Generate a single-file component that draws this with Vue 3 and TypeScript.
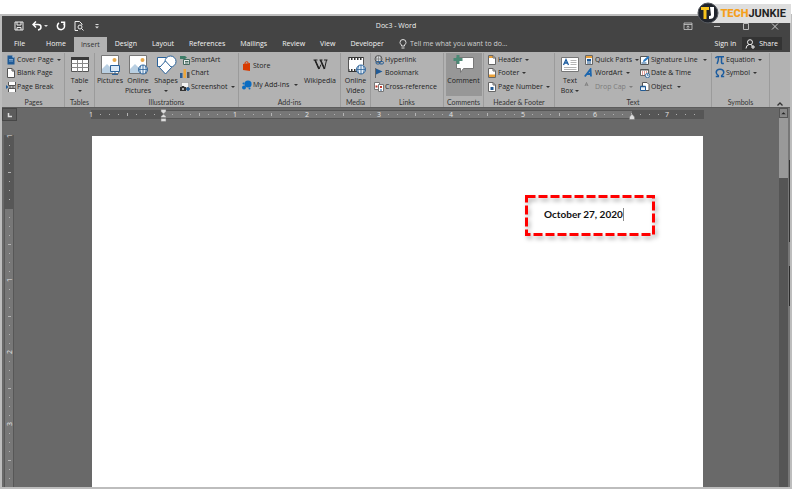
<script setup lang="ts">
interface Item {
  icon: string
  label: string
  menu?: boolean
  disabled?: boolean
}

const tabs: string[] = ['File', 'Home', 'Insert', 'Design', 'Layout', 'References', 'Mailings', 'Review', 'View', 'Developer']

const pages: Item[] = [
  { icon: 'cover', label: 'Cover Page', menu: true },
  { icon: 'blank', label: 'Blank Page' },
  { icon: 'break', label: 'Page Break' },
]
const art: Item[] = [
  { icon: 'smartart', label: 'SmartArt' },
  { icon: 'chart', label: 'Chart' },
  { icon: 'screenshot', label: 'Screenshot', menu: true },
]
const addins: Item[] = [
  { icon: 'store', label: 'Store' },
  { icon: 'addins', label: 'My Add-ins', menu: true },
]
const links: Item[] = [
  { icon: 'link', label: 'Hyperlink' },
  { icon: 'bookmark', label: 'Bookmark' },
  { icon: 'crossref', label: 'Cross-reference' },
]
const headers: Item[] = [
  { icon: 'header', label: 'Header', menu: true },
  { icon: 'footer', label: 'Footer', menu: true },
  { icon: 'pagenum', label: 'Page Number', menu: true },
]
const textParts: Item[] = [
  { icon: 'parts', label: 'Quick Parts', menu: true },
  { icon: 'wordart', label: 'WordArt', menu: true },
  { icon: 'dropcap', label: 'Drop Cap', menu: true, disabled: true },
]
const textInserts: Item[] = [
  { icon: 'signature', label: 'Signature Line', menu: true },
  { icon: 'date', label: 'Date & Time' },
  { icon: 'object', label: 'Object', menu: true },
]
const symbols: Item[] = [
  { icon: 'equation', label: 'Equation', menu: true },
  { icon: 'symbol', label: 'Symbol', menu: true },
]

const small: Record<string, string> = {
  cover: '<path d="M1.5 .5h5l2 2v7h-7z" fill="#1f5a96"/><path d="M6.500 .5v2h2z" fill="#dfe8f2"/><path d="M3 4.500h4M3 6h4" stroke="#7ea7d0"/>',
  blank: '<path d="M1.500 .5h4.500l2.500 2.500v6.500h-7z" fill="#fff" stroke="#555"/><path d="M6 .5v2.500h2.500" fill="none" stroke="#555"/>',
  break: '<path d="M2.500 0v3.500h7V0M2.500 10V6.500h7V10" fill="#fff" stroke="#555"/><path d="M3 5h7" stroke="#555" stroke-dasharray="2 1"/><path d="M0 3l2.500 2L0 7z" fill="#1f5a96"/>',
  smartart: '<path d="M0 1h5l2 1.500L5 4H0z" fill="#3d7d67"/><path d="M3.500 4.500h6v5h-6z" fill="#e8eeec" stroke="#44695e"/><path d="M5 6.500h3.500M5 8h3.500" stroke="#44695e"/>',
  chart: '<path d="M0 5h2.500v5H0z" fill="#2a5c94"/><path d="M3.500 1H6v9H3.500z" fill="#eda63b"/><path d="M7 4h2.500v6H7z" fill="#55585c"/>',
  screenshot: '<path d="M1.500 .5h7v5h-7z" fill="#f3f3f3" stroke="#888" stroke-dasharray="1 1"/><path d="M0 5h1.500l.5-1h2l.5 1H6v4H0z" fill="#333"/><circle cx="3" cy="7" r="1" fill="#ddd"/><path d="M8 5v4M6 7h4" stroke="#215a94" stroke-width="1.500"/>',
  store: '<path d="M1 3l7-1v8l-7-1z" fill="#d83b01"/><path d="M3 3V1.500Q4.500 0 6 1.200V2.500" fill="none" stroke="#d83b01"/>',
  addins: '<circle cx="6" cy="4" r="3.600" fill="#0b6cc1"/><circle cx="2" cy="7.500" r="2" fill="#0b6cc1"/><circle cx="1.500" cy="3.500" r="1" fill="#0b6cc1"/><circle cx="7.500" cy="8.500" r="1" fill="#0b6cc1"/>',
  link: '<circle cx="4.500" cy="4" r="3.500" fill="#d9dde0" stroke="#555"/><path d="M1 4h7M4.500 .5v7M2.500 1q-1 3 0 6M6.500 1q1 3 0 6" fill="none" stroke="#666" stroke-width=".6"/><rect x="2" y="6.500" width="4" height="2.500" rx="1.200" fill="none" stroke="#215a94"/><rect x="5.500" y="6.500" width="4" height="2.500" rx="1.200" fill="none" stroke="#215a94"/>',
  bookmark: '<path d="M1.500 0v10" stroke="#666"/><path d="M2 .5l6.500 3L2 6.500z" fill="#1f5a96"/>',
  crossref: '<path d="M.5 .5h5v7h-5z" fill="#fff" stroke="#777"/><path d="M4.500 2.500h5v7h-5z" fill="#fff" stroke="#777"/><path d="M1.500 3.500h2v2h-2zM6 4h2v2H6z" fill="#c0392b"/><path d="M6 8h2" stroke="#215a94"/>',
  header: '<path d="M1.500 .5h4.500l2.500 2.500v6.500h-7z" fill="#fff" stroke="#666"/><path d="M2 1h4v2H2z" fill="#e9a13b"/><path d="M6 .5v2.500h2.500" fill="none" stroke="#666"/>',
  footer: '<path d="M1.500 .5h4.500l2.500 2.500v6.500h-7z" fill="#fff" stroke="#666"/><path d="M2 6.500h6V9H2z" fill="#e9a13b"/><path d="M6 .5v2.500h2.500" fill="none" stroke="#666"/>',
  pagenum: '<path d="M1.500 .5h4.500l2.500 2.500v6.500h-7z" fill="#fff" stroke="#666"/><path d="M3.500 5h3v3h-3z" fill="#215a94"/><path d="M6 .5v2.500h2.500" fill="none" stroke="#666"/>',
  parts: '<path d="M1.500 .5h7v9h-7z" fill="#f4f4f4" stroke="#666"/><path d="M2 1h6v2H2z" fill="#e9a13b"/><path d="M3 4h4v2.500H3z" fill="#215a94"/><path d="M3 8h4" stroke="#215a94"/>',
  wordart: '<path d="M.8 8.500L6.500 1.200 7 8.500M3 6h4" fill="none" stroke="#1c66ae" stroke-width="1.800"/>',
  dropcap: '<path d="M1 4l1.500-3.500L4 4M1.500 3h2" fill="none" stroke="#777" stroke-width=".8"/>',
  signature: '<path d="M.5 1.500h8v8h-8z" fill="#fff" stroke="#555"/><path d="M3 7l.5-2 4.500-4 1.500 1.500-4.500 4z" fill="#2a7ac4"/><path d="M1.500 8h5" stroke="#215a94"/>',
  date: '<path d="M.5 1.500h8v6h-8z" fill="#fff" stroke="#666"/><path d="M.5 1h8v1.500h-8z" fill="#555"/><path d="M2 4h1M4 4h1M6 4h1M2 6h1M4 6h1" stroke="#c0392b"/><circle cx="7.500" cy="7.500" r="2.200" fill="#e7eef5" stroke="#215a94" stroke-width=".8"/><path d="M7.500 6v1.500h1" fill="none" stroke="#215a94" stroke-width=".7"/>',
  object: '<path d="M2.500 .5h4.500l2 2v6h-6.500z" fill="#fff" stroke="#555"/><path d="M.5 4.500h5v4h-5z" fill="#e9f1f9" stroke="#215a94"/><path d="M.5 4.500h5" stroke="#215a94" stroke-width="1.500"/>',
  equation: '<path d="M.5 3.200Q1.200 1.700 2.500 1.700H9M3.500 2Q3.500 6 2 8.800M6.500 2v5.500q.3 1.500 2.300 .8" fill="none" stroke="#1c5c9f" stroke-width="1.500"/>',
  symbol: '<path d="M.8 8.500h2.500V7.500Q1.200 6 1.200 4.200 1.500 1.300 5 1.300t3.800 2.900Q8.800 6 6.700 7.500V8.500h2.500" fill="none" stroke="#1c5c9f" stroke-width="1.500"/>',
}

const large: Record<string, string> = {
  table: '<path d="M1.500 2.500h17v14h-17z" fill="#fff" stroke="#555"/><path d="M1 2h18v3H1z" fill="#3a3a3a"/><path d="M1.500 8.500h17M1.500 12.500h17M7.500 5v11.500M12.500 5v11.500" stroke="#8a8a8a"/>',
  pictures: '<path d="M1.500 .5h17v18h-17z" fill="#fff" stroke="#777"/><circle cx="14.500" cy="5" r="2" fill="#e6a84c"/><path d="M2 18v-4l5-5 6 6v3z" fill="#b9cfe2"/><path d="M10.500 10.500h9v6h-9z" fill="#dce9f5" stroke="#2b6299"/><path d="M15 17v2M12 19.500h6" stroke="#2b6299"/>',
  online: '<path d="M1.500 .5h17v18h-17z" fill="#fff" stroke="#777"/><circle cx="14.500" cy="5" r="2" fill="#e6a84c"/><path d="M2 18v-4l5-5 6 6v3z" fill="#b9cfe2"/><circle cx="15" cy="14.500" r="4.500" fill="#e3eef8" stroke="#2b6299"/><path d="M10.500 14.500h9M15 10v9M12.500 11q-1.500 3.500 0 7M17.500 11q1.500 3.500 0 7" fill="none" stroke="#2b6299" stroke-width=".8"/>',
  shapes: '<path d="M1.500 2.500h9v9h-9z" fill="#fff" stroke="#2b6299"/><circle cx="14.500" cy="6.500" r="5.500" fill="#fff" stroke="#2b6299"/><path d="M9.500 6l6 6.500-6 6.500-6-6.500z" fill="#fff" stroke="#2b6299"/>',
  wiki: '<path d="M3.500 5h4M9.500 5h3M14 5h3.500M5 5l4 9 2-4.500M8 5M10.500 5l4 9L16.500 5" fill="none" stroke="#222"/><path d="M5 5l4 9M10.500 5l4 9" stroke="#222" stroke-width="1.600"/>',
  video: '<path d="M2 2h16v15H2z" fill="#fff"/><path d="M2 2.500h16M2 16.500h16" stroke="#333"/><path d="M2 4h16M2 15h16" stroke="#333" stroke-width="2" stroke-dasharray="1.500 1.500"/><path d="M2.500 2v15M17.500 2v8" stroke="#555"/><circle cx="15" cy="14.500" r="4.500" fill="#e3eef8" stroke="#2b6299"/><path d="M10.500 14.500h9M15 10v9M12.500 11q-1.500 3.500 0 7M17.500 11q1.500 3.500 0 7" fill="none" stroke="#2b6299" stroke-width=".8"/>',
  comment: '<path d="M2.500 2.500h17v11h-10l-3 4v-4h-4z" fill="#fff" stroke="#777"/><path d="M4 0v9M-.5 4.500h9" stroke="#4c8a76" stroke-width="3"/>',
  textbox: '<path d="M1.500 2.500h17v14h-17z" fill="#fff" stroke="#777"/><path d="M3.500 10L6 4.500 8.500 10M4.500 8h3" fill="none" stroke="#1c5c9f" stroke-width="1.300"/><path d="M10.500 5.500h6M10.500 7.500h6M10.500 9.500h6M4 12.500h12.500M4 14.500h12.500" stroke="#b4b4b4"/>',
}

interface Tick {
  pos: number
  kind: 'dot' | 'half' | 'number'
  text: string
}

function ticks(before: number, after: number): Tick[] {
  const list: Tick[] = []
  for (let i = -before; i <= after; i++) {
    if (i === 0) continue
    const kind = i % 8 === 0 ? 'number' : i % 4 === 0 ? 'half' : 'dot'
    list.push({ pos: i * 9, kind, text: String(Math.abs(i) / 8) })
  }
  return list
}

const across: Tick[] = ticks(8, 59)
const down: Tick[] = ticks(8, 30)
</script>

<template>
  <div class="screen">
    <div class="watermark">
      <svg class="badge" viewBox="0 0 22 22" aria-hidden="true">
        <circle cx="11" cy="11" r="10" fill="#20242c" stroke="#55585e" />
        <path d="M4 5h8v3H9.500v9h-3V8H4z" fill="#f7c31c" />
        <path d="M13 5h4v8.500q0 3.500-5 3.500v-3q2 0 2-1z" fill="#fff" />
      </svg>
      <span class="brand"><b>TECH</b>JUNKIE</span>
    </div>

    <div class="window">
      <header class="titlebar">
        <div class="quick">
          <button aria-label="Save"><svg viewBox="0 0 10 10"><path d="M1 1h8v8H1zM3 1v3h4V1M3 9V6.500h4V9" fill="none" stroke="#eee" /></svg></button>
          <button class="undo" aria-label="Undo"><svg viewBox="0 0 10 10"><path d="M4 .5L1 3.500l3 3M1.500 3.500H6q3 0 3 2.500T6 9" fill="none" stroke="#fff" stroke-width="1.500" /></svg><i class="caret" /></button>
          <button aria-label="Redo"><svg viewBox="0 0 10 10"><path d="M3 2a3.600 3.600 0 1 0 4.500 .5M5 1.200h3.500V5" fill="none" stroke="#fff" stroke-width="1.500" /></svg></button>
          <button aria-label="Print preview"><svg viewBox="0 0 10 10"><path d="M4 9.500H1v-9h4.500L8 3v1" fill="none" stroke="#eee" /><circle cx="6" cy="6" r="2" fill="none" stroke="#eee" /><path d="M7.500 7.500l2 2" stroke="#eee" /></svg></button>
          <button aria-label="Customize toolbar"><svg viewBox="0 0 10 10"><path d="M3.500 3.500h3" stroke="#ddd" /><path d="M3 5.500h4l-2 2z" fill="#ddd" /></svg></button>
        </div>
        <h1>Doc3 - Word</h1>
        <div class="controls">
          <button aria-label="Ribbon display options"><svg viewBox="0 0 10 10"><path d="M1 2h8v6.500H1zM1 3.500h8M5 8V5M3.500 6.200L5 4.800l1.500 1.400" fill="none" stroke="#ccc" stroke-width=".8" /></svg></button>
          <button aria-label="Minimize"><svg viewBox="0 0 10 10"><path d="M2 5.500h6" stroke="#bbb" /></svg></button>
          <button aria-label="Restore"><svg viewBox="0 0 10 10"><path d="M2.500 2.500h5v6h-5z" fill="none" stroke="#bbb" /></svg></button>
          <button aria-label="Close"><svg viewBox="0 0 10 10"><path d="M2 2.500l6 6M8 2.500l-6 6" stroke="#ccc" /></svg></button>
        </div>
      </header>

      <nav class="tabs">
        <button v-for="t in tabs" :key="t" :class="{ active: t === 'Insert', file: t === 'File' }">{{ t }}</button>
        <label class="tell">
          <svg viewBox="0 0 8 10" aria-hidden="true"><path d="M2.500 7V6Q1 4.800 1 3.500a3 3 0 0 1 6 0Q7 4.800 5.500 6v1zM2.500 9h3" fill="none" stroke="#ddd" /></svg>
          <input type="text" placeholder="Tell me what you want to do..." />
        </label>
        <button class="signin">Sign in</button>
        <button class="share">
          <svg viewBox="0 0 10 10" aria-hidden="true"><circle cx="5" cy="3.200" r="2.500" fill="none" stroke="#eee" /><path d="M1 9.500q.3-3.500 3-4M6 5.700l1.500 1.300M6 8h4M8 6v4" fill="none" stroke="#eee" /></svg>
          Share
        </button>
      </nav>

      <div class="ribbon">
        <section class="group">
          <div class="body">
            <div class="stack">
              <button v-for="i in pages" :key="i.label" class="item"><svg viewBox="0 0 10 10" v-html="small[i.icon]" />{{ i.label }}<i v-if="i.menu" class="caret" /></button>
            </div>
          </div>
          <h2>Pages</h2>
        </section>

        <section class="group">
          <div class="body center">
            <button class="big"><svg viewBox="0 0 20 20" v-html="large.table" /><span>Table</span><i class="caret below" /></button>
          </div>
          <h2>Tables</h2>
        </section>

        <section class="group">
          <div class="body">
            <button class="big"><svg viewBox="0 0 20 20" v-html="large.pictures" /><span>Pictures</span></button>
            <button class="big"><svg viewBox="0 0 20 20" v-html="large.online" /><span>Online<br />Pictures</span></button>
            <button class="big"><svg viewBox="0 0 20 20" v-html="large.shapes" /><span>Shapes</span><i class="caret below" /></button>
            <div class="stack">
              <button v-for="i in art" :key="i.label" class="item"><svg viewBox="0 0 10 10" v-html="small[i.icon]" />{{ i.label }}<i v-if="i.menu" class="caret" /></button>
            </div>
          </div>
          <h2>Illustrations</h2>
        </section>

        <section class="group">
          <div class="body spread">
            <div class="stack two">
              <button v-for="i in addins" :key="i.label" class="item"><svg viewBox="0 0 10 10" v-html="small[i.icon]" />{{ i.label }}<i v-if="i.menu" class="caret far" /></button>
            </div>
            <button class="big"><svg viewBox="0 0 20 20" v-html="large.wiki" /><span>Wikipedia</span></button>
          </div>
          <h2>Add-ins</h2>
        </section>

        <section class="group">
          <div class="body center">
            <button class="big"><svg viewBox="0 0 20 20" v-html="large.video" /><span>Online<br />Video</span></button>
          </div>
          <h2>Media</h2>
        </section>

        <section class="group">
          <div class="body">
            <div class="stack">
              <button v-for="i in links" :key="i.label" class="item"><svg viewBox="0 0 10 10" v-html="small[i.icon]" />{{ i.label }}</button>
            </div>
          </div>
          <h2>Links</h2>
        </section>

        <section class="group">
          <div class="body center">
            <button class="big pressed"><svg viewBox="0 0 20 20" v-html="large.comment" /><span>Comment</span></button>
          </div>
          <h2>Comments</h2>
        </section>

        <section class="group">
          <div class="body">
            <div class="stack">
              <button v-for="i in headers" :key="i.label" class="item"><svg viewBox="0 0 10 10" v-html="small[i.icon]" />{{ i.label }}<i v-if="i.menu" class="caret" /></button>
            </div>
          </div>
          <h2>Header &amp; Footer</h2>
        </section>

        <section class="group">
          <div class="body">
            <button class="big"><svg viewBox="0 0 20 20" v-html="large.textbox" /><span>Text<br />Box<i class="caret inline" /></span></button>
            <div class="stack parts">
              <button v-for="i in textParts" :key="i.label" class="item" :disabled="i.disabled"><svg viewBox="0 0 10 10" v-html="small[i.icon]" />{{ i.label }}<i v-if="i.menu" class="caret" /></button>
            </div>
            <div class="stack">
              <button v-for="i in textInserts" :key="i.label" class="item"><svg viewBox="0 0 10 10" v-html="small[i.icon]" />{{ i.label }}<i v-if="i.menu" class="caret far" /></button>
            </div>
          </div>
          <h2>Text</h2>
        </section>

        <section class="group">
          <div class="body">
            <div class="stack">
              <button v-for="i in symbols" :key="i.label" class="item"><svg viewBox="0 0 10 10" v-html="small[i.icon]" />{{ i.label }}<i v-if="i.menu" class="caret" /></button>
            </div>
          </div>
          <h2>Symbols</h2>
        </section>

        <button class="collapse" aria-label="Collapse the ribbon"><svg viewBox="0 0 8 6"><path d="M1.500 4.500L4 2l2.500 2.500" fill="none" stroke="#333" stroke-width="1.300" /></svg></button>
      </div>

      <main class="workspace">
        <div class="side">
          <button class="tabstop" aria-label="Tab selector"><svg viewBox="0 0 6 6"><path d="M1.500 1v3.500H5" fill="none" stroke="#ddd" stroke-width="1.500" /></svg></button>
          <svg class="vruler" viewBox="0 0 10 352" preserveAspectRatio="xMidYMin slice" aria-hidden="true">
            <rect width="10" height="352" fill="#575757" />
            <rect x="1" y="74" width="8" height="278" fill="#777" />
            <g v-for="t in down" :key="t.pos" :transform="`translate(5 ${t.pos + 73})`">
              <text v-if="t.kind === 'number'" class="num" transform="rotate(-90)" y="3">{{ t.text }}</text>
              <rect v-else-if="t.kind === 'half'" x="-1" width="3" height="1" fill="#b4b4b4" />
              <rect v-else width="1" height="1" fill="#b0b0b0" />
            </g>
          </svg>
        </div>

        <div class="sheet">
          <svg class="hruler" viewBox="0 0 613 14" aria-hidden="true">
            <rect y="2" width="613" height="9" fill="#565656" />
            <rect x="73" y="3" width="468" height="7" fill="#777" />
            <g v-for="t in across" :key="t.pos" :transform="`translate(${t.pos + 72} 6)`">
              <text v-if="t.kind === 'number'" class="num" y="3">{{ t.text }}</text>
              <rect v-else-if="t.kind === 'half'" y="-1" width="1" height="3" fill="#b4b4b4" />
              <rect v-else width="1" height="1" fill="#b0b0b0" />
            </g>
            <path d="M70 1.500h5v2L72.500 6 70 3.500zM72.500 6L75 8.500v1h-5v-1zM70 10.500h5v3h-5z" fill="#ddd" stroke="#777" stroke-width=".5" />
            <path d="M541 6l2.500 3v2.500h-5V9z" fill="#ddd" stroke="#777" stroke-width=".5" />
          </svg>
          <article class="page">
            <div class="callout">
              <svg viewBox="0 0 130 41" aria-hidden="true"><rect x="1.500" y="1.500" width="127" height="38" fill="none" stroke="#f00" stroke-width="3" stroke-dasharray="9 3" /></svg>
              <p>October 27, 2020</p>
            </div>
          </article>
        </div>

        <div class="scroll">
          <button aria-label="Scroll up"><svg viewBox="0 0 8 8"><path d="M1.500 5.500L4 3l2.500 2.500z" fill="#222" /></svg></button>
          <div class="thumb" />
        </div>
        <div class="edge" />
      </main>
    </div>
  </div>
</template>

<style>
body {
  background: #fff;
}
</style>

<style scoped>
* {
  box-sizing: border-box;
}
.screen {
  position: relative;
  display: flex;
  flex-direction: column;
  min-height: 100vh;
  padding: 14px 2px 0 0;
  font: 7px/10px "Open Sans", sans-serif;
}
button {
  display: flex;
  align-items: center;
  padding: 0;
  border: 0;
  background: none;
  color: inherit;
  font: inherit;
  white-space: nowrap;
}
h1, h2, p {
  margin: 0;
  font: inherit;
}
.watermark {
  position: absolute;
  top: 2px;
  right: 3px;
  display: flex;
  align-items: center;
}
.badge {
  z-index: 1;
  width: 22px;
  height: 22px;
  margin-right: -12px;
}
.brand {
  padding: 0 5px 0 13px;
  background: #dedede;
  color: #222;
  font: bold 11px/19px Roboto, sans-serif;
}
.brand b {
  color: #f5a01c;
}
.window {
  display: flex;
  flex: 1;
  flex-direction: column;
  border: 2px solid #bdbdbd;
  background: #696969;
}
.titlebar {
  display: grid;
  grid-template-columns: 1fr auto 1fr;
  align-items: center;
  height: 20px;
  background: #444;
  color: #f0f0f0;
}
.titlebar svg {
  width: 10px;
  height: 10px;
}
.quick {
  display: flex;
  gap: 8px;
  padding-left: 12px;
}
.undo .caret {
  border-top-color: #ddd;
}
.controls {
  display: flex;
  justify-content: flex-end;
  gap: 19px;
  padding-right: 10px;
}
.tabs {
  display: flex;
  gap: 1px;
  height: 16px;
  background: #444;
  color: #f4f4f4;
}
.tabs button {
  padding: 0 7px;
}
.tabs .file {
  padding: 0 13px 0 12px;
}
.tabs .active {
  margin-top: 1px;
  background: #b2b2b2;
  color: #333;
}
.tell {
  display: flex;
  flex: 1;
  align-items: center;
  gap: 3px;
  padding-left: 7px;
}
.tell svg {
  width: 8px;
  height: 10px;
}
.tell input {
  flex: 1;
  min-width: 0;
  padding: 0;
  border: 0;
  outline: 0;
  background: none;
  color: #eee;
  font: inherit;
}
.tell input::placeholder {
  color: #d0d0d0;
}
.tabs .signin {
  padding-right: 5px;
}
.tabs .share {
  gap: 4px;
  height: 13px;
  margin: 1px 8px 0 0;
  padding: 0 4px 0 3px;
  background: #333;
}
.share svg {
  width: 10px;
  height: 10px;
}
.ribbon {
  display: grid;
  grid-template-columns: 62fr 30fr 144fr 102fr 30fr 73fr 40fr 71fr 157fr 58fr 20fr;
  height: 56px;
  padding-left: 1px;
  border-bottom: 1px solid #5c5c5c;
  background: #b2b2b2;
  color: #222;
}
.group {
  display: flex;
  flex-direction: column;
  min-width: 0;
  margin: 1px 0 3px;
  border-right: 1px solid #9b9b9b;
}
.body {
  display: flex;
  height: 43px;
  padding: 0 1px;
}
.body.center {
  justify-content: center;
  padding: 0;
}
.body.spread {
  justify-content: space-between;
}
.group h2 {
  margin-top: 1px;
  color: #333;
  font: 7px/10px Lato, sans-serif;
  text-align: center;
  white-space: nowrap;
}
.stack {
  display: grid;
  grid-template-rows: repeat(3, 1fr);
  justify-items: start;
  height: 41px;
  padding-left: 2px;
}
.stack.two {
  grid-template-rows: repeat(2, 1fr);
  height: 38px;
  margin-top: 3px;
}
.big + .stack,
.stack + .stack {
  padding-left: 0;
}
.parts {
  width: 56px;
}
.item {
  gap: 1px;
}
.item svg {
  width: 10px;
  height: 10px;
}
.item:disabled {
  color: #7d7d7d;
}
.caret {
  display: inline-block;
  margin-left: 2px;
  border: 2px solid transparent;
  border-top-color: #333;
  border-bottom: 0;
}
.caret.inline {
  vertical-align: middle;
}
.caret.far {
  margin-left: 4px;
}
.caret.below {
  margin: 4px 0 0;
}
.item:disabled .caret {
  border-top-color: #7d7d7d;
}
.big {
  flex-direction: column;
  width: 28px;
  padding-top: 2px;
}
.big svg {
  width: 20px;
  height: 20px;
  margin-bottom: 1px;
  overflow: visible;
}
.spread .big {
  width: 38px;
}
.pressed {
  width: 36px;
  background: #979797;
}
.collapse {
  align-self: end;
  justify-content: center;
  height: 12px;
}
.collapse svg {
  width: 8px;
  height: 6px;
}
.workspace {
  display: grid;
  flex: 1;
  grid-template-columns: 15px 74fr 613fr 75fr 9px 2px;
}
.side {
  display: flex;
  flex-direction: column;
  gap: 14px;
}
.tabstop {
  justify-content: center;
  height: 13px;
  border: 1px solid #474747;
  background: #5c5c5c;
}
.tabstop svg {
  width: 6px;
  height: 6px;
}
.vruler {
  flex: 1;
  width: 10px;
  margin-left: 2px;
}
.num {
  fill: #e4e4e4;
  font: 7px "Open Sans", sans-serif;
  text-anchor: middle;
}
.sheet {
  grid-column: 3;
  display: flex;
  flex-direction: column;
}
.hruler {
  display: block;
  width: 100%;
  overflow: visible;
}
.page {
  position: relative;
  flex: 1;
  margin: 14px 1px 0;
  background: #fff;
}
.callout {
  position: absolute;
  top: 59px;
  right: 48px;
}
.callout svg {
  display: block;
  width: 130px;
  height: 41px;
  filter: drop-shadow(2px 3px 2px rgba(0, 0, 0, 0.3));
}
.callout p {
  position: absolute;
  top: 13px;
  left: 19px;
  border-right: 1px solid #888;
  color: #111;
  font: bold 10px/13px Lato, sans-serif;
  white-space: nowrap;
}
.scroll {
  grid-column: 5;
  background: #555;
}
.scroll button {
  justify-content: center;
  width: 100%;
  height: 10px;
  border: 1px solid #555;
  background: #888;
}
.scroll svg {
  width: 8px;
  height: 8px;
}
.thumb {
  height: 60px;
  background: #999;
}
.edge {
  border-left: 1px solid #777;
  background: linear-gradient(#777 52px, #333 52px, #333 134px, #777 134px, #777 158px, #2c2c2c 158px, #2c2c2c 198px, #777 198px);
}
</style>
